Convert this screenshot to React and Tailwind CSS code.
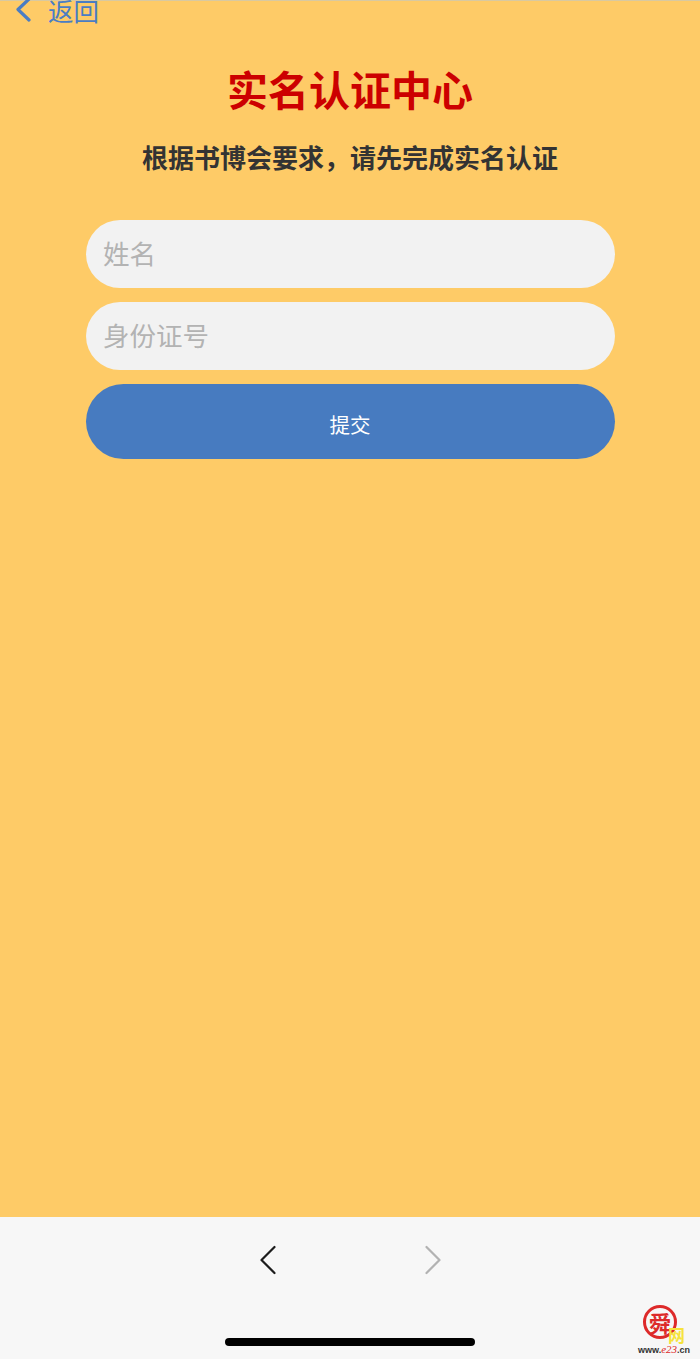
import React from "react";

const font = { fontFamily: '"Noto Sans CJK SC", "Liberation Sans", sans-serif' };

export default function App() {
  return (
    <div className="relative w-[700px] h-[1359px] flex flex-col overflow-hidden bg-[#f7f7f7]" style={font}>
      <main className="h-[1217px] flex flex-col bg-[#fecb67] border-t border-[#d9c9a0]">
        <div className="flex items-center h-[24px] -mt-[3px] pl-[14px] text-[#4a7dc4]">
          <svg width="20" height="26" viewBox="0 0 20 26" fill="none" stroke="currentColor" strokeWidth="3.2" strokeLinecap="round" strokeLinejoin="round">
            <path d="M15 2 L4 12.5 L15 23" />
          </svg>
          <span className="ml-[14px] text-[25.5px] leading-[26px]">返回</span>
        </div>
        <h1 className="mt-[41px] text-center text-[41px] leading-[50px] font-bold text-[#cc0000]">实名认证中心</h1>
        <p className="mt-[26px] text-center text-[26px] leading-[36px] font-bold text-[#333333]">根据书博会要求，请先完成实名认证</p>
        <form className="mt-[45px] mx-[86px] w-[529px] flex flex-col gap-[14px]">
          <input placeholder="姓名" className="h-[68px] rounded-[34px] bg-[#f2f2f2] pl-[17px] pb-[4px] text-[26.5px] outline-none placeholder:text-[#b3b3b3]" />
          <input placeholder="身份证号" className="h-[68px] rounded-[34px] bg-[#f2f2f2] pl-[17px] pb-[4px] text-[26.5px] outline-none placeholder:text-[#b3b3b3]" />
          <button type="button" className="h-[75px] rounded-[37.5px] bg-[#477bc0] pr-[1px] text-white text-[20.5px] leading-[80px]">提交</button>
        </form>
      </main>
      <footer className="flex-1 relative">
        <div className="flex justify-center gap-[149px] pt-[28px]">
          <svg width="16" height="30" viewBox="0 0 16 30" fill="none" stroke="#1c1c1c" strokeWidth="2.2" strokeLinecap="round" strokeLinejoin="round">
            <path d="M14.5 2 L1.5 15 L14.5 28" />
          </svg>
          <svg width="16" height="30" viewBox="0 0 16 30" fill="none" stroke="#b2b2b2" strokeWidth="2.2" strokeLinecap="round" strokeLinejoin="round">
            <path d="M1.5 2 L14.5 15 L1.5 28" />
          </svg>
        </div>
        <div className="absolute left-[225px] top-[121px] w-[250px] h-[8px] rounded-full bg-black" />
        <div className="absolute left-[638px] top-[88px] w-[62px] h-[54px]">
          <div className="absolute left-[5px] top-[0px] w-[34px] h-[34px] rounded-full border-[3px] border-[#dd2a2a] flex items-center justify-center text-[#dd2a2a] text-[22px] leading-none font-bold">舜</div>
          <span className="absolute left-[30px] top-[21px] text-[17px] leading-[17px] font-bold text-[#f6e33c]">网</span>
          <span className="absolute left-0 top-[39px] whitespace-nowrap text-[9px] leading-[11px] font-bold text-[#333333]" style={{ fontFamily: '"Liberation Sans", sans-serif' }}>
            www.<span className="text-[#dd2a2a] italic font-normal text-[11px]" style={{ fontFamily: '"Liberation Serif", serif' }}>e23</span>.cn
          </span>
        </div>
      </footer>
    </div>
  );
}
